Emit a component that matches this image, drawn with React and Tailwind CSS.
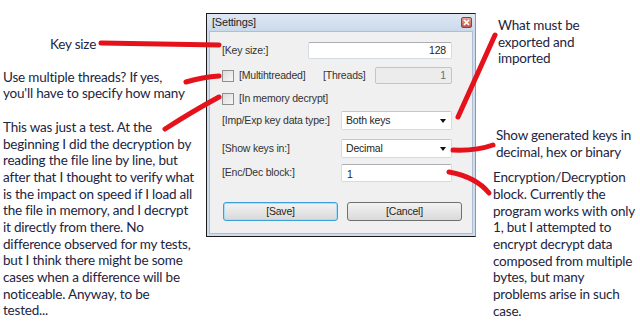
const NOTE_FONT = { fontFamily: "Lato, 'Open Sans', sans-serif" };

function Lines({ lines, className = "" }) {
  return (
    <div className={`leading-[16.67px] ${className}`}>
      {lines.map((l, i) => (
        <div key={i} className="whitespace-nowrap">{l}</div>
      ))}
    </div>
  );
}

function TextBox({ value, right, disabled, className = "", top }) {
  return (
    <div
      className={`h-full border rounded-[2px] flex px-[5px] text-[10.5px] ${top ? "items-start pt-[2px]" : "items-center"} ${right ? "justify-end" : ""} ${
        disabled ? "bg-[#ececec] border-[#c4c4c4] text-[#6d6d6d]" : "bg-white border-[#d5dbe3] border-t-[#abadb3] text-[#1e1e1e]"
      } ${className}`}
    >
      {value}
    </div>
  );
}

function Combo({ value }) {
  return (
    <div className="h-full w-[111px] bg-white border border-[#d5dbe3] border-t-[#c3c7ce] rounded-[2px] flex items-center justify-between pl-[4px] pr-[5px] text-[10.5px] text-[#1e1e1e]">
      <span>{value}</span>
      <span className="w-0 h-0 border-l-[3.5px] border-r-[3.5px] border-t-[4px] border-l-transparent border-r-transparent border-t-[#111]" />
    </div>
  );
}

function Check() {
  return <span className="w-[12px] h-[12px] border border-[#8f8f8f] bg-gradient-to-br from-[#dcdcdc] to-[#f7f7f7] shrink-0" />;
}

function Dialog() {
  return (
    <div className="mt-[13px] w-[270px] h-[224px] border border-[#1b1b1b] border-r-[#5aa9d6] bg-[#cfdcec] flex flex-col shrink-0" style={{ fontFamily: "'Liberation Sans', Arial, sans-serif" }}>
      <div className="h-[17px] flex items-center justify-between pl-[5px] pr-[3px] bg-gradient-to-b from-[#dfe8f4] to-[#cad9ea]">
        <span className="text-[11px] text-[#1e1e1e]">[Settings]</span>
        <span className="w-[11px] h-[11px] border border-[#7a4a42] rounded-[2px] bg-gradient-to-b from-[#e0a496] to-[#c0584a] flex items-center justify-center">
          <svg width="7" height="7" viewBox="0 0 7 7">
            <path d="M1 1 L6 6 M6 1 L1 6" stroke="#fff" strokeWidth="1.6" />
          </svg>
        </span>
      </div>
      <div className="flex-1 mx-[2px] mb-[2px] bg-[#f0f0f0] border border-[#aebfd3] pl-[12px] text-[10.5px] text-[#333]">
        <div className="mt-[10px] h-[17px] flex items-center">
          <span className="w-[86px]">[Key size:]</span>
          <TextBox value="128" right className="w-[144px]" />
        </div>
        <div className="mt-[8px] h-[17px] flex items-center">
          <Check />
          <span className="ml-[5px] w-[84px]">[Multihtreaded]</span>
          <span className="w-[52px]">[Threads]</span>
          <TextBox value="1" right disabled className="w-[77px]" />
        </div>
        <div className="mt-[8px] h-[13px] flex items-center">
          <Check />
          <span className="ml-[5px]">[In memory decrypt]</span>
        </div>
        <div className="mt-[6px] h-[19px] flex items-center">
          <span className="w-[119px]">[Imp/Exp key data type:]</span>
          <Combo value="Both keys" />
        </div>
        <div className="mt-[9px] h-[19px] flex items-center">
          <span className="w-[119px]">[Show keys in:]</span>
          <Combo value="Decimal" />
        </div>
        <div className="mt-[6px] h-[18px] flex items-center">
          <span className="w-[119px]">[Enc/Dec block:]</span>
          <TextBox value="1" top className="w-[111px]" />
        </div>
        <div className="mt-[20px] h-[19px] flex gap-[9px] pl-[1px]">
          <button className="w-[115px] h-full rounded-[3px] border border-[#3c9fd8] bg-gradient-to-b from-[#f3f3f3] to-[#d9d9d9] text-[10.5px] text-[#1e1e1e] shadow-[inset_0_0_0_1px_#a9dcf5]">[Save]</button>
          <button className="w-[115px] h-full rounded-[3px] border border-[#707070] bg-gradient-to-b from-[#f3f3f3] to-[#d9d9d9] text-[10.5px] text-[#1e1e1e]">[Cancel]</button>
        </div>
      </div>
    </div>
  );
}

export default function App() {
  return (
    <div className="relative w-[640px] h-[324px] bg-white overflow-hidden flex text-[13.5px] tracking-[-0.2px] text-[#1c2541]" style={NOTE_FONT}>
      <div className="w-[206px] shrink-0 pl-[3px]">
        <Lines className="mt-[36px] pl-[47px]" lines={["Key size"]} />
        <Lines className="mt-[16px]" lines={["Use multiple threads? If yes,", "you'll have to specify how many"]} />
        <Lines
          className="mt-[17px]"
          lines={[
            "This was just a test. At the",
            "beginning I did the decryption by",
            "reading the file line by line, but",
            "after that I thought to verify what",
            "is the impact on speed if I load all",
            "the file in memory, and I decrypt",
            "it directly from there. No",
            "difference observed for my tests,",
            "but I think there might be some",
            "cases when a difference will be",
            "noticeable. Anyway, to be",
            "tested...",
          ]}
        />
      </div>
      <Dialog />
      <div className="flex-1">
        <Lines className="mt-[17px] pl-[22px]" lines={["What must be", "exported and", "imported"]} />
        <Lines className="mt-[60px] pl-[20px]" lines={["Show generated keys in", "decimal, hex or binary"]} />
        <Lines
          className="mt-[9px] pl-[17px]"
          lines={[
            "Encryption/Decryption",
            "block. Currently the",
            "program works with only",
            "1, but I attempted to",
            "encrypt decrypt data",
            "composed from multiple",
            "bytes, but many",
            "problems arise in such",
            "case.",
          ]}
        />
      </div>
      <svg className="absolute inset-0 pointer-events-none" width="640" height="324" viewBox="0 0 640 324">
        <g fill="none" stroke="#e5121b" strokeWidth="5" strokeLinecap="round">
          <path d="M101 43 Q160 44 219 45" />
          <path d="M186 82 Q203 77 219 76" />
          <path d="M165 129 Q193 111 219 97" />
          <path d="M495 35 L458 117" />
          <path d="M453 150 Q476 151 493 145" />
          <path d="M449 172 Q476 177 489 193" />
        </g>
      </svg>
    </div>
  );
}
